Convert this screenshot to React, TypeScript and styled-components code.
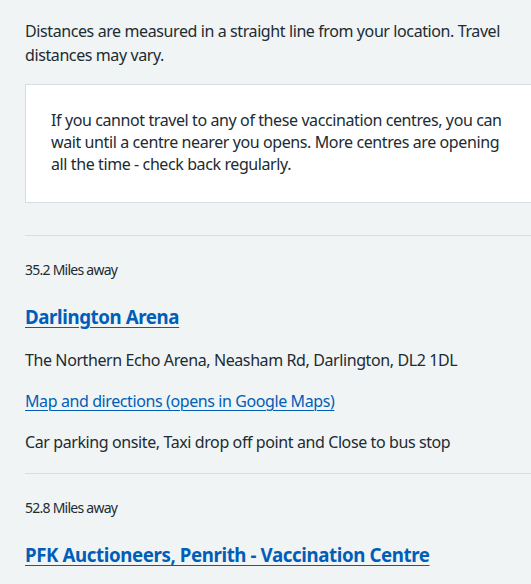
import { createGlobalStyle } from 'styled-components';
import styled from 'styled-components';

const GlobalStyle = createGlobalStyle`
  html, body {
    margin: 0;
    padding: 0;
    background: #f0f4f5;
    overflow-x: hidden;
  }
  body {
    font-family: "Noto Sans", "Open Sans", Arial, sans-serif;
    color: #212b32;
    letter-spacing: -0.4px;
    -webkit-font-smoothing: antialiased;
  }
`;

const centres = [
  {
    distance: '35.2 Miles away',
    name: 'Darlington Arena',
    address: 'The Northern Echo Arena, Neasham Rd, Darlington, DL2 1DL',
    facilities: 'Car parking onsite, Taxi drop off point and Close to bus stop',
  },
  {
    distance: '52.8 Miles away',
    name: 'PFK Auctioneers, Penrith - Vaccination Centre',
    address: 'PFK Auctioneers, Penrith, CA11 0DN',
    facilities: 'Car parking onsite',
  },
];

export default function App() {
  return (
    <>
      <GlobalStyle />
      <Page>
        <Intro>
          Distances are measured in a straight line from your location. Travel distances may vary.
        </Intro>
        <Panel>
          <PanelText>
            If you cannot travel to any of these vaccination centres, you can wait until a centre
            nearer you opens. More centres are opening all the time - check back regularly.
          </PanelText>
        </Panel>
        <ResultList>
          {centres.map((c) => (
            <Result key={c.name}>
              <Distance>{c.distance}</Distance>
              <CentreName>
                <a href="#">{c.name}</a>
              </CentreName>
              <Body>{c.address}</Body>
              <Body>
                <MapLink href="#">Map and directions (opens in Google Maps)</MapLink>
              </Body>
              <Body>{c.facilities}</Body>
            </Result>
          ))}
        </ResultList>
      </Page>
    </>
  );
}

// Styled Components
const Page = styled.main`
  width: 510px;
  padding: 19px 0 0 25px;
`;

const Intro = styled.p`
  margin: 0 0 17px;
  font-size: 16px;
  line-height: 24px;
`;

const Panel = styled.div`
  background: #ffffff;
  border: 1px solid #d8dde0;
  padding: 24px 25px 27px;
`;

const PanelText = styled.p`
  margin: 0;
  font-size: 16px;
  line-height: 22px;
`;

const ResultList = styled.ul`
  list-style: none;
  margin: 32px 0 0;
  padding: 0;
`;

const Result = styled.li`
  border-top: 1px solid #d8dde0;
  padding-bottom: 19px;
`;

const Distance = styled.p`
  margin: 24px 0 0;
  font-size: 14px;
  line-height: 20px;
  letter-spacing: -0.75px;
`;

const CentreName = styled.h2`
  margin: 23px 0 0;
  font-size: 18.7px;
  line-height: 28px;
  font-weight: 700;
  letter-spacing: -0.4px;

  a {
    color: #005eb8;
    text-decoration: underline;
    text-underline-offset: 3px;
  }
`;

const Body = styled.p`
  margin: 17px 0 0;
  font-size: 16px;
  line-height: 24px;

  & + & {
    margin-top: 17px;
  }
`;

const MapLink = styled.a`
  color: #005eb8;
  text-decoration: underline;
  text-decoration-thickness: 1px;
  text-underline-offset: 3px;
`;
